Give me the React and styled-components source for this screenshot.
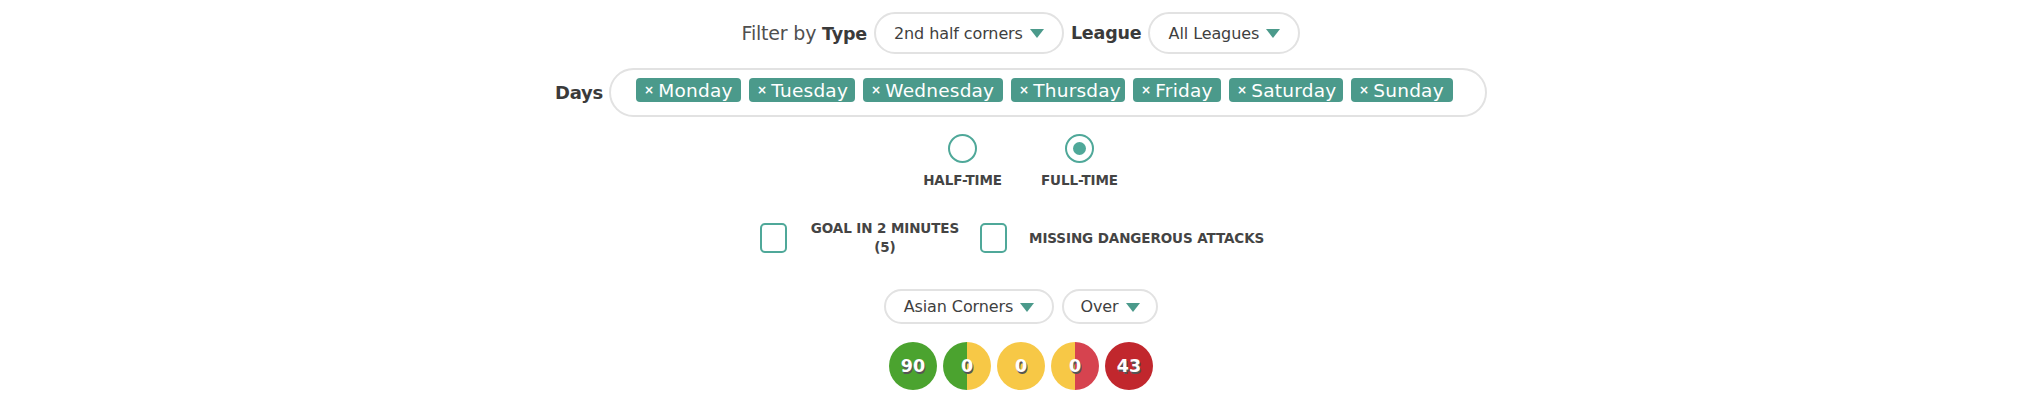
import React from "react";
import styled, { createGlobalStyle } from "styled-components";

const Global = createGlobalStyle`
  html, body { margin: 0; padding: 0; background: #fff; }
  body { font-family: "DejaVu Sans", "Open Sans", sans-serif; color: #444; }
`;

const TEAL = "#4b9a8b";
const RING = "#4fa899";

const Page = styled.div`
  display: flex;
  flex-direction: column;
  align-items: center;
  padding-top: 12px;
`;

const FilterRow = styled.div`
  display: flex;
  align-items: center;
  gap: 7px;
`;

const Label = styled.span`
  font-size: ${(p) => p.$fs || 17.5}px;
  color: #505050;
  font-weight: ${(p) => (p.$bold ? 700 : 400)};
  letter-spacing: -0.2px;
  white-space: nowrap;
  b { color: #3a3a3a; font-weight: 700; font-size: 17.5px; }
`;

const BoldLabel = styled(Label)`
  color: #3a3a3a;
  font-weight: 700;
`;

const Select = styled.div`
  display: flex;
  align-items: center;
  justify-content: center;
  gap: 7px;
  height: ${(p) => p.$h || 42}px;
  width: ${(p) => p.$w}px;
  box-sizing: border-box;
  border: 2px solid #e2e2e2;
  border-radius: 24px;
  font-size: 16px;
  color: #3f3f3f;
  letter-spacing: -0.1px;
  white-space: nowrap;
`;

const Caret = styled.span`
  width: 0;
  height: 0;
  border-left: 7px solid transparent;
  border-right: 7px solid transparent;
  border-top: 9px solid ${TEAL};
  margin-top: 1px;
`;

const DaysRow = styled.div`
  display: flex;
  align-items: center;
  gap: 6px;
  margin-top: 14px;
`;

const TagBox = styled.div`
  display: flex;
  align-items: flex-start;
  gap: 8px;
  width: 878px;
  height: 49px;
  box-sizing: border-box;
  border: 2px solid #e2e2e2;
  border-radius: 26px;
  padding: 8px 25px 0;
`;

const Tag = styled.span`
  display: inline-flex;
  align-items: center;
  gap: 4px;
  height: 24px;
  width: ${(p) => p.$w}px;
  box-sizing: border-box;
  padding: 0 0 0 8px;
  background: ${TEAL};
  border-radius: 4px;
  color: #fff;
  font-size: 18.5px;
  letter-spacing: 0.2px;
  white-space: nowrap;
`;

const X = styled.span`
  font-size: 12px;
  font-weight: 700;
`;

const RadioRow = styled.div`
  display: flex;
  gap: 39px;
  margin-top: 17px;
`;

const RadioItem = styled.div`
  display: flex;
  flex-direction: column;
  align-items: center;
  gap: 9px;
  width: 78px;
`;

const Radio = styled.span`
  width: 29px;
  height: 29px;
  box-sizing: border-box;
  border: 2px solid ${RING};
  border-radius: 50%;
  display: flex;
  align-items: center;
  justify-content: center;
  &::after {
    content: "";
    display: ${(p) => (p.$on ? "block" : "none")};
    width: 13px;
    height: 13px;
    border-radius: 50%;
    background: ${RING};
  }
`;

const SmallCaps = styled.span`
  font-size: 13.5px;
  font-weight: 700;
  color: #444;
  text-align: center;
  line-height: 17px;
  letter-spacing: -0.1px;
  white-space: nowrap;
`;

const CheckRow = styled.div`
  display: flex;
  align-items: center;
  margin-top: 30px;
  margin-right: 18px;
`;

const Check = styled.span`
  width: 27px;
  height: 30px;
  box-sizing: border-box;
  border: 2px solid ${RING};
  border-radius: 5px;
  flex-shrink: 0;
`;

const CheckLabel = styled(SmallCaps)`
  margin: 0 ${(p) => p.$mr || 0}px 0 ${(p) => p.$ml}px;
  line-height: 19px;
`;

const SelectRow = styled.div`
  display: flex;
  gap: 8px;
  margin-top: 32px;
`;

const ScoreRow = styled.div`
  display: flex;
  gap: 6px;
  margin-top: 18px;
`;

const Score = styled.span`
  width: 48px;
  height: 48px;
  border-radius: 50%;
  background: ${(p) => p.$bg};
  display: flex;
  align-items: center;
  justify-content: center;
  color: #fff;
  font-weight: 700;
  font-size: 17.5px;
  text-shadow: 1px 2px 0 #555;
`;

const G = "#4ba32f";
const Y = "#f7c846";
const P = "#d6434f";
const R = "#c1272d";

const days = [
  ["Monday", 105],
  ["Tuesday", 106],
  ["Wednesday", 140],
  ["Thursday", 114],
  ["Friday", 88],
  ["Saturday", 114],
  ["Sunday", 102],
];

export default function App() {
  return (
    <>
      <Global />
      <Page>
        <FilterRow>
          <Label $fs={19}>
            Filter by <b>Type</b>
          </Label>
          <Select $w={190}>
            2nd half corners <Caret />
          </Select>
          <BoldLabel>League</BoldLabel>
          <Select $w={152}>
            All Leagues <Caret />
          </Select>
        </FilterRow>

        <DaysRow>
          <BoldLabel $fs={18}>Days</BoldLabel>
          <TagBox>
            {days.map(([d, w]) => (
              <Tag key={d} $w={w}>
                <X>×</X>
                {d}
              </Tag>
            ))}
          </TagBox>
        </DaysRow>

        <RadioRow>
          <RadioItem>
            <Radio />
            <SmallCaps>HALF-TIME</SmallCaps>
          </RadioItem>
          <RadioItem>
            <Radio $on />
            <SmallCaps>FULL-TIME</SmallCaps>
          </RadioItem>
        </RadioRow>

        <CheckRow>
          <Check />
          <CheckLabel $ml={24} $mr={21}>
            GOAL IN 2 MINUTES
            <br />
            (5)
          </CheckLabel>
          <Check />
          <CheckLabel $ml={22}>MISSING DANGEROUS ATTACKS</CheckLabel>
        </CheckRow>

        <SelectRow>
          <Select $w={170} $h={35}>
            Asian Corners <Caret />
          </Select>
          <Select $w={96} $h={35}>
            Over <Caret />
          </Select>
        </SelectRow>

        <ScoreRow>
          <Score $bg={G}>90</Score>
          <Score $bg={`linear-gradient(90deg, ${G} 50%, ${Y} 50%)`}>0</Score>
          <Score $bg={Y}>0</Score>
          <Score $bg={`linear-gradient(90deg, ${Y} 50%, ${P} 50%)`}>0</Score>
          <Score $bg={R}>43</Score>
        </ScoreRow>
      </Page>
    </>
  );
}
